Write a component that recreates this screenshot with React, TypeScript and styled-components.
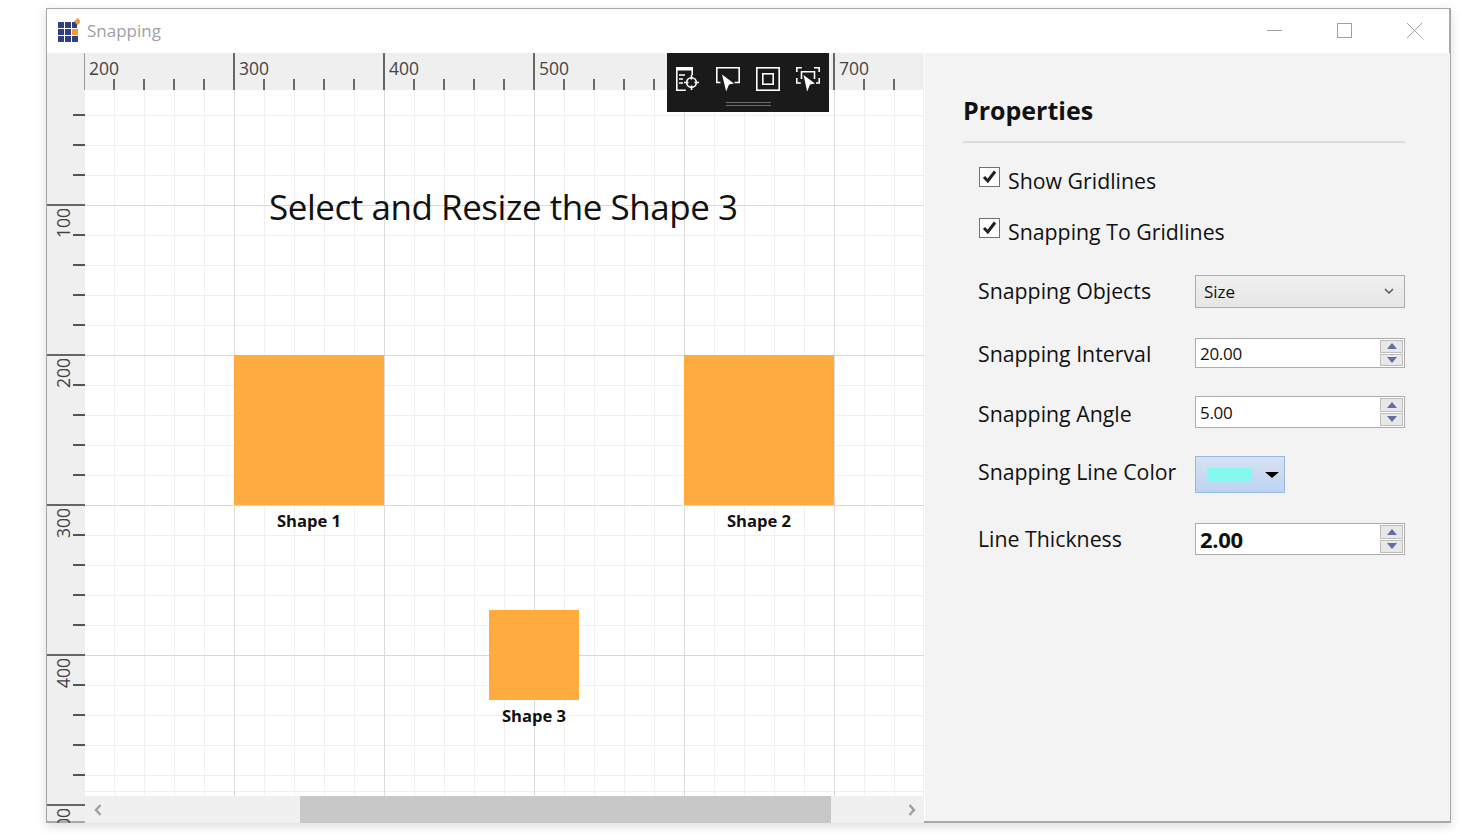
import React from 'react';
import styled, { createGlobalStyle } from 'styled-components';

const FONT = '"Open Sans", "Noto Sans", "Liberation Sans", sans-serif';

const GlobalStyle = createGlobalStyle`
  html, body {
    margin: 0;
    padding: 0;
    background: #fff;
    font-family: ${FONT};
    overflow: hidden;
  }
`;

const Page = styled.div`
  width: 1460px;
  height: 834px;
  padding: 8px 0 0 46px;
  box-sizing: border-box;
`;

const Win = styled.div`
  width: 1405px;
  height: 815px;
  box-sizing: border-box;
  border: 1px solid #a8a8a8;
  border-bottom-width: 2px;
  border-right-width: 2px;
  background: #fff;
  box-shadow: 0 3px 10px rgba(0, 0, 0, 0.14);
  display: flex;
  flex-direction: column;
`;

const TitleBar = styled.div`
  height: 44px;
  flex: none;
  display: flex;
  align-items: center;
  padding: 0 0 2px 11px;
  box-sizing: border-box;
`;

const AppTitle = styled.span`
  font-size: 17px;
  color: #a0a0a6;
  flex: 1;
  margin-left: 7px;
`;

const WinButton = styled.button`
  width: 70px;
  height: 42px;
  padding: 0;
  border: 0;
  background: none;
  display: flex;
  align-items: center;
  justify-content: center;
`;

const Body = styled.div`
  flex: 1;
  display: flex;
  min-height: 0;
`;

const Designer = styled.div`
  width: 877px;
  flex: none;
  display: grid;
  grid-template-columns: 38px 839px;
  grid-template-rows: 37px 706px 27px;
  background: #efefef;
  border-right: 1px solid #fff;
`;

const Corner = styled.div`
  background: #efefef;
`;

const RulerSvg = styled.svg`
  display: block;
  overflow: visible;
  text {
    font-family: ${FONT};
    font-size: 17.5px;
    fill: #444;
  }
`;

const RulerClip = styled.div`
  height: 733px;
  overflow: hidden;
  grid-row: 2 / 4;
  grid-column: 1;
`;

const TopRulerCell = styled.div`
  position: relative;
  z-index: 2;
`;

const Canvas = styled.div`
  position: relative;
  overflow: hidden;
  background-color: #fff;
  background-image:
    repeating-linear-gradient(to right, transparent 0 149px, #dcdcdc 149px 150px),
    repeating-linear-gradient(to bottom, transparent 0 149px, #d8d8d8 149px 150px),
    repeating-linear-gradient(to right, #f0f0f0 0 1px, transparent 1px 30px),
    repeating-linear-gradient(to bottom, #efefef 0 1px, transparent 1px 30px);
  background-position: 0 0, 0 -34px, -1px 0, 0 -5px;
`;

const CanvasTitle = styled.div`
  position: absolute;
  left: 184px;
  top: 92px;
  font-size: 35px;
  line-height: 50px;
  color: #111;
  white-space: nowrap;
  letter-spacing: -0.46px;
`;

const Shape = styled.div<{ $x: number; $y: number; $size: number }>`
  position: absolute;
  left: ${(p) => p.$x}px;
  top: ${(p) => p.$y}px;
  width: ${(p) => p.$size}px;
  height: ${(p) => p.$size}px;
  background: #ffab40;
`;

const ShapeLabel = styled.div`
  position: absolute;
  top: 100%;
  left: -40px;
  right: -40px;
  margin-top: 4px;
  text-align: center;
  font-size: 16.6px;
  line-height: 24px;
  font-weight: 700;
  color: #111;
`;

const QuickBar = styled.div`
  position: absolute;
  left: 582px;
  top: 0;
  width: 162px;
  height: 59px;
  background: #1a1a1a;
  box-sizing: border-box;
  padding: 14px 9px 0;
  display: flex;
  gap: 16px;
  align-items: flex-start;
`;

const Grip = styled.div`
  position: absolute;
  left: 59px;
  top: 49px;
  width: 45px;
  height: 4px;
  border-top: 1px solid #6a6a6a;
  border-bottom: 1px solid #6a6a6a;
  box-sizing: border-box;
`;

const ScrollBar = styled.div`
  display: flex;
  align-items: stretch;
  background: #f0f0f0;
`;

const ScrollBtn = styled.div`
  width: 25px;
  display: flex;
  align-items: center;
  justify-content: center;
`;

const ScrollTrack = styled.div`
  flex: 1;
  padding: 0 68px 0 190px;
  display: flex;
`;

const ScrollThumb = styled.div`
  flex: 1;
  background: #c8c8c8;
`;

const Panel = styled.div`
  flex: 1;
  background: #f3f3f3;
  padding: 35px 45px 0 38px;
`;

const Heading = styled.h2`
  margin: 0;
  font-size: 25px;
  line-height: 44px;
  height: 53px;
  font-weight: 700;
  color: #111;
  border-bottom: 2px solid #dcdcdc;
`;

const CheckRow = styled.label<{ $gap: number }>`
  display: flex;
  align-items: flex-start;
  margin: ${(p) => p.$gap}px 0 0 16px;
  height: 32px;
  gap: 8px;
`;

const CheckBox = styled.span`
  width: 21px;
  height: 20px;
  box-sizing: border-box;
  border: 1px solid #707070;
  background: #fff;
  flex: none;
  display: flex;
  align-items: center;
  justify-content: center;
`;

const CheckText = styled.span`
  font-size: 21.3px;
  line-height: 28px;
  color: #111;
`;

const FieldRow = styled.div<{ $top: number; $height: number }>`
  display: grid;
  grid-template-columns: 217px 210px;
  align-items: center;
  margin: ${(p) => p.$top}px 0 0 15px;
  height: ${(p) => p.$height}px;
`;

const FieldLabel = styled.span<{ $up?: number }>`
  font-size: 21.3px;
  line-height: 28px;
  color: #111;
  white-space: nowrap;
  padding-bottom: ${(p) => Math.max(p.$up || 0, 0) * 2}px;
  padding-top: ${(p) => Math.max(-(p.$up || 0), 0) * 2}px;
`;

const Select = styled.div`
  height: 33px;
  box-sizing: border-box;
  border: 1px solid #acacac;
  background: linear-gradient(#f0f0f0, #e6e6e6);
  display: flex;
  align-items: center;
  justify-content: space-between;
  padding: 0 10px 0 8px;
  font-size: 17px;
  color: #111;
`;

const SpinBox = styled.div<{ $bold?: boolean }>`
  height: 100%;
  box-sizing: border-box;
  border: 1px solid #acacac;
  background: #fff;
  display: flex;
  align-items: center;
  justify-content: space-between;
  padding: 0 1px 0 4px;
  font-size: ${(p) => (p.$bold ? 22 : 17)}px;
  font-weight: ${(p) => (p.$bold ? 700 : 400)};
  letter-spacing: -0.3px;
  color: #111;
`;

const Spinner = styled.div`
  width: 23px;
  height: calc(100% - 2px);
  display: flex;
  flex-direction: column;
  gap: 1px;
`;

const SpinBtn = styled.div`
  flex: 1;
  background: #e8e8e8;
  border: 1px solid #bdbdbd;
  display: flex;
  align-items: center;
  justify-content: center;
`;

const ColorButton = styled.div`
  width: 90px;
  height: 37px;
  box-sizing: border-box;
  border: 1px solid #9ab8dc;
  background: linear-gradient(#d6e2f2, #bcd3f1);
  display: flex;
  align-items: center;
  padding: 0 5px 0 11px;
  justify-content: space-between;
`;

const Swatch = styled.div`
  width: 45px;
  height: 13px;
  background: #84f9ee;
`;

const Caret = styled.div`
  width: 0;
  height: 0;
  border-left: 7px solid transparent;
  border-right: 7px solid transparent;
  border-top: 6px solid #000;
`;

const TOP_START = 200;

function TopRuler() {
  const items = [];
  for (let i = 0; i < 6; i++) {
    const x = i * 150 - 1;
    items.push(
      <rect key={'m' + i} x={i === 0 ? x : x - 1 + 0} y={0} width={i === 0 ? 1 : 2} height={37} fill={i === 0 ? '#9a9a9a' : '#666'} />,
    );
    items.push(
      <text key={'t' + i} x={x + 5} y={22}>
        {TOP_START + i * 100}
      </text>,
    );
    for (let j = 1; j < 5; j++) {
      if (x + j * 30 < 839) items.push(<rect key={`s${i}-${j}`} x={x + j * 30 - 1} y={26} width={2} height={11} fill="#6a6a6a" />);
    }
  }
  return (
    <RulerSvg width={839} height={37}>
      {items}
    </RulerSvg>
  );
}

function LeftRuler() {
  const items = [];
  for (let i = 0; i < 5; i++) {
    const y = 115 + i * 150;
    items.push(<rect key={'m' + i} x={0} y={y - 1} width={38} height={2} fill="#666" />);
    items.push(
      <text key={'t' + i} transform={`translate(23 ${y + 33}) rotate(-90)`}>
        {(i + 1) * 100}
      </text>,
    );
    for (let j = -3; j < 2; j++) {
      if (j === 0) continue;
      const ty = y + j * 30;
      if (ty < 733) items.push(<rect key={`s${i}${j}`} x={26} y={ty - 1} width={12} height={2} fill="#555" />);
    }
  }
  return (
    <RulerSvg width={38} height={733}>
      {items}
    </RulerSvg>
  );
}

const White = { fill: 'none', stroke: '#fff', strokeWidth: 1.6 };

function TargetIcon() {
  return (
    <svg width="24" height="24" viewBox="0 0 24 24">
      <path d="M0 0h17v3.5H0z" fill="#fff" />
      <path d="M.8 3v20.200h9M16.200 3v5" {...White} />
      <path d="M3 8h6M3 12h4M3 16h4" {...White} />
      <circle cx="15.500" cy="15.500" r="4.800" {...White} />
      <path d="M15.500 8v4.500M15.500 18.500v4.500M8 15.500h4.500M18.500 15.500H23" {...White} />
    </svg>
  );
}

function SelectIcon() {
  return (
    <svg width="24" height="26" viewBox="0 0 24 26">
      <path d="M4.500 15.500H.8V.8h22.400v14.700H18.500" {...White} />
      <path d="M6 7.500l12 9-5 1-2.800 7z" fill="#fff" />
    </svg>
  );
}

function FrameIcon() {
  return (
    <svg width="24" height="24" viewBox="0 0 24 24">
      <rect x=".8" y=".8" width="22.400" height="22.400" {...White} />
      <rect x="6.800" y="6.800" width="10.400" height="10.400" {...White} />
    </svg>
  );
}

function SelectAllIcon() {
  return (
    <svg width="24" height="26" viewBox="0 0 24 26">
      <path d="M.8 5V.8h5M18 .8h5.200V5M.8 11v5h4M23.200 11v5H20" {...White} />
      <path d="M5.500 12V4.800h13V12" {...White} />
      <path d="M7.500 8l11.500 8.500-5 1-2.800 7z" fill="#fff" />
    </svg>
  );
}

function SpinArrow({ up }: { up?: boolean }) {
  return (
    <svg width="10" height="6" viewBox="0 0 10 6">
      <path d={up ? 'M5 0l5 6H0z' : 'M5 6L0 0h10z'} fill="#5f6fa8" />
    </svg>
  );
}

function Spin() {
  return (
    <Spinner>
      <SpinBtn>
        <SpinArrow up />
      </SpinBtn>
      <SpinBtn>
        <SpinArrow />
      </SpinBtn>
    </Spinner>
  );
}

function Check() {
  return (
    <svg width="15" height="14" viewBox="0 0 15 14">
      <path d="M2 7L5.800 11 13 1.500" fill="none" stroke="#222" strokeWidth="3" />
    </svg>
  );
}

export default function App() {
  return (
    <Page>
      <GlobalStyle />
      <Win>
        <TitleBar>
          <svg width="22" height="24" viewBox="0 0 22 24">
            <path d="M0 4h6v6H0zM7 4h6v6H7zM14 4h5v6h-5zM0 11h6v6H0zM7 11h6v6H7zM0 18h6v6H0zM7 18h6v6H7zM14 18h6v6h-6z" fill="#2f3f80" />
            <path d="M14 11h6v6h-6zM19.500 0l3.500 3.500-3.500 3.500L16 3.500z" fill="#f5983a" />
          </svg>
          <AppTitle>Snapping</AppTitle>
          <WinButton>
            <svg width="15" height="15" viewBox="0 0 15 15">
              <path d="M0 7.500h15" stroke="#a0a0a0" />
            </svg>
          </WinButton>
          <WinButton>
            <svg width="15" height="15" viewBox="0 0 15 15">
              <rect x=".5" y=".5" width="14" height="14" fill="none" stroke="#a0a0a0" />
            </svg>
          </WinButton>
          <WinButton>
            <svg width="15" height="15" viewBox="0 0 15 15">
              <path d="M0 0l15 15M15 0L0 15" stroke="#a0a0a0" />
            </svg>
          </WinButton>
        </TitleBar>
        <Body>
          <Designer>
            <Corner />
            <TopRulerCell>
              <TopRuler />
              <QuickBar>
                <TargetIcon />
                <SelectIcon />
                <FrameIcon />
                <SelectAllIcon />
                <Grip />
              </QuickBar>
            </TopRulerCell>
            <RulerClip>
              <LeftRuler />
            </RulerClip>
            <Canvas>
              <CanvasTitle>Select and Resize the Shape 3</CanvasTitle>
              <Shape $x={149} $y={265} $size={150}>
                <ShapeLabel>Shape 1</ShapeLabel>
              </Shape>
              <Shape $x={599} $y={265} $size={150}>
                <ShapeLabel>Shape 2</ShapeLabel>
              </Shape>
              <Shape $x={404} $y={520} $size={90}>
                <ShapeLabel>Shape 3</ShapeLabel>
              </Shape>
            </Canvas>
            <ScrollBar>
              <ScrollBtn>
                <svg width="8" height="12" viewBox="0 0 8 12">
                  <path d="M6.500 1L2 6l4.500 5" fill="none" stroke="#a0a0a0" strokeWidth="2.500" />
                </svg>
              </ScrollBtn>
              <ScrollTrack>
                <ScrollThumb />
              </ScrollTrack>
              <ScrollBtn>
                <svg width="8" height="12" viewBox="0 0 8 12">
                  <path d="M1.500 1L6 6l-4.500 5" fill="none" stroke="#a0a0a0" strokeWidth="2.500" />
                </svg>
              </ScrollBtn>
            </ScrollBar>
          </Designer>
          <Panel>
            <Heading>Properties</Heading>
            <CheckRow $gap={24}>
              <CheckBox>
                <Check />
              </CheckBox>
              <CheckText>Show Gridlines</CheckText>
            </CheckRow>
            <CheckRow $gap={19}>
              <CheckBox>
                <Check />
              </CheckBox>
              <CheckText>Snapping To Gridlines</CheckText>
            </CheckRow>
            <FieldRow $top={25} $height={33}>
              <FieldLabel $up={1}>Snapping Objects</FieldLabel>
              <Select>
                Size
                <svg width="10" height="7" viewBox="0 0 10 7">
                  <path d="M1 1l4 4 4-4" fill="none" stroke="#555" strokeWidth="1.500" />
                </svg>
              </Select>
            </FieldRow>
            <FieldRow $top={30} $height={29}>
              <FieldLabel $up={-1}>Snapping Interval</FieldLabel>
              <SpinBox>
                20.00
                <Spin />
              </SpinBox>
            </FieldRow>
            <FieldRow $top={29} $height={30}>
              <FieldLabel $up={-2}>Snapping Angle</FieldLabel>
              <SpinBox>
                5.00
                <Spin />
              </SpinBox>
            </FieldRow>
            <FieldRow $top={30} $height={37}>
              <FieldLabel $up={3}>Snapping Line Color</FieldLabel>
              <ColorButton>
                <Swatch />
                <Caret />
              </ColorButton>
            </FieldRow>
            <FieldRow $top={30} $height={32}>
              <FieldLabel>Line Thickness</FieldLabel>
              <SpinBox $bold>
                2.00
                <Spin />
              </SpinBox>
            </FieldRow>
          </Panel>
        </Body>
      </Win>
    </Page>
  );
}
